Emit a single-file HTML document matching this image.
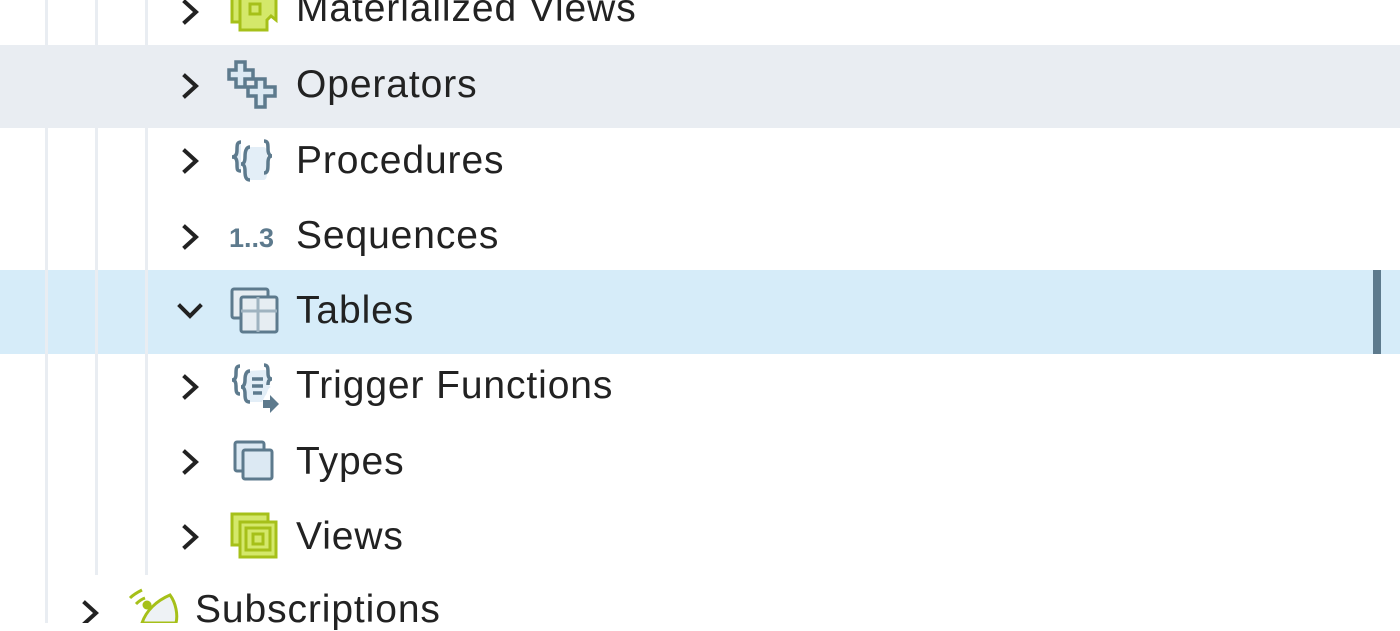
<!DOCTYPE html>
<html><head><style>
body{margin:0;width:1400px;height:623px;overflow:hidden;background:#fff;font-family:"Liberation Sans",sans-serif;position:relative}
.vl{position:absolute;width:3px;background:#e9edf2;top:0}
.row{position:absolute;left:0;width:1400px;height:84px}
.t{position:absolute;font-size:39px;color:#222;line-height:40px;letter-spacing:0.9px}
</style></head><body>
<div class="row" style="top:45px;background:#e9edf2;height:83px"></div>
<div class="row" style="top:270px;background:#d6ecf9"></div>
<div style="position:absolute;left:1373px;top:270px;width:8px;height:84px;background:#5d7a8d"></div>
<div class="vl" style="left:45px;height:623px"></div>
<div class="vl" style="left:95px;height:575px"></div>
<div class="vl" style="left:145px;height:575px"></div>

<svg width="1400" height="623" style="position:absolute;left:0;top:0">
<g fill="none" stroke="#222" stroke-width="4" stroke-linecap="square">
<path d="M185 2 L196 12 L185 22"/>
<path d="M185 76 L196 86 L185 96"/>
<path d="M185 151 L196 161 L185 171"/>
<path d="M185 227 L196 237 L185 247"/>
<path d="M180 306 L190 316 L200 306"/>
<path d="M185 377 L196 387 L185 397"/>
<path d="M185 452 L196 462 L185 472"/>
<path d="M185 527 L196 537 L185 547"/>
<path d="M85 603 L96 613 L85 623"/>
</g>
<g fill="#d4e86a" stroke="#a6c019" stroke-width="3"><rect x="232" y="-8" width="32" height="30"/><path d="M240 -2h36v22l-5 -4 -4 4v10h-27z"/><rect x="250" y="4" width="10" height="10" fill="none"/></g>
<g fill="#dce9f3" stroke="#5d7a8d" stroke-width="3.5"><path d="M236 62h9v8h8v9h-8v8h-9v-8h-7v-9h7z"/><path d="M256 79h9v8h10v9h-10v11h-9v-11h-8v-9h8z"/></g>
<g fill="#e3eef7" stroke="#5d7a8d" stroke-width="3.5"><path d="M241 142c-4 0-4 3-4 8s-2 7-5 7c3 0 5 1 5 7s0 7 4 7"/><path d="M250 147c-4 0-5 4-5 10s-2 7-4 7c2 0 4 1 4 7s1 9 5 9h13c4 0 4-4 4-9s2-7 4-7c-2 0-4-1-4-7s0-10-4-10z" stroke="none"/><path d="M250 147c-4 0-5 4-5 10s-2 7-4 7c2 0 4 1 4 7s1 9 5 9" fill="none"/><path d="M264 141c4 0 4 3 4 8s2 7 4 7c-2 0-4 1-4 7s0 10-4 10" fill="none"/></g>
<text x="229" y="247" font-family="Liberation Sans" font-weight="bold" font-size="27" fill="#5d7a8d">1..3</text>
<g fill="#e6edf2" stroke="#5d7a8d" stroke-width="3"><rect x="232" y="289" width="36" height="29" rx="2"/><rect x="241" y="297" width="36" height="35" rx="2"/><path d="M241 311h36M258 297v35" stroke="#9fb3c0"/></g>
<g fill="#e3eef7" stroke="#5d7a8d" stroke-width="3.5"><path d="M240 366c-4 0-4 3-4 8s-2 6-4 6c2 0 4 1 4 6s0 8 4 8" fill="none"/><path d="M250 371c-4 0-5 4-5 9s-2 7-4 7c2 0 4 1 4 7s1 8 5 8h12l3-6c2-2 2-4 3-6s2-3 4-3c-2 0-4-1-4-7s0-10-4-10z" stroke="none"/><path d="M250 371c-4 0-5 4-5 9s-2 7-4 7c2 0 4 1 4 7s1 8 5 8" fill="none"/><path d="M264 365c4 0 4 3 4 8s2 6 4 6c-2 0-4 1-4 6" fill="none"/><path d="M252 379h11M252 386h11M253 393h9"/></g>
<path d="M263 400h7v-5l9 9-9 9v-5h-7z" fill="#5d7a8d"/>
<g stroke="#5d7a8d" stroke-width="3" fill="#dce9f3"><rect x="235" y="442" width="29" height="29" rx="2"/><rect x="243" y="450" width="29" height="29" rx="2"/></g>
<g fill="#d4e86a" stroke="#a6c019" stroke-width="3"><rect x="232" y="514" width="36" height="31"/><rect x="240" y="522" width="36" height="35"/><rect x="246" y="528" width="24" height="22" fill="none"/><rect x="253" y="534" width="10" height="10" fill="none"/></g>
<g fill="none" stroke="#a6c019" stroke-width="3"><path d="M130 598c4-4 8-6 12-8M136 604c3-3 6-5 9-6"/></g>
<path d="M142 623c4-12 14-22 28-28 6 8 8 20 6 28z" fill="#eef2f5" stroke="#a6c019" stroke-width="3"/>
<circle cx="147" cy="605" r="4.5" fill="#a6c019"/>
</svg>

<div class="t" style="left:296px;top:-11px">Materialized Views</div>
<div class="t" style="left:296px;top:65px">Operators</div>
<div class="t" style="left:296px;top:141px">Procedures</div>
<div class="t" style="left:296px;top:216px">Sequences</div>
<div class="t" style="left:296px;top:291px">Tables</div>
<div class="t" style="left:296px;top:366px">Trigger Functions</div>
<div class="t" style="left:296px;top:442px">Types</div>
<div class="t" style="left:296px;top:517px">Views</div>
<div class="t" style="left:195px;top:590px">Subscriptions</div>
</body></html>
